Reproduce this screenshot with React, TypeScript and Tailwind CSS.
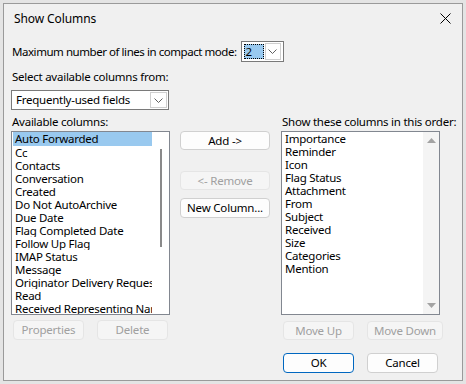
import React from "react";

const FONT = { fontFamily: '"Noto Sans", "Segoe UI", sans-serif' };

function Chevron() {
  return (
    <svg width="9" height="5" viewBox="0 0 9 5" fill="none">
      <path d="M0.5 0.5 L4.5 4.5 L8.5 0.5" stroke="#606060" strokeWidth="1" />
    </svg>
  );
}

function Btn({
  children,
  disabled,
  primary,
  className = "",
}: {
  children: React.ReactNode;
  disabled?: boolean;
  primary?: boolean;
  className?: string;
}) {
  const base =
    "flex items-center justify-center rounded-[4px] text-[11.5px] tracking-[-0.2px] leading-none border ";
  const style = disabled
    ? "bg-[#f5f5f5] border-[#e5e5e5] text-[#a0a0a0]"
    : primary
    ? "bg-[#fdfdfd] border-[#0067c0] text-black"
    : "bg-[#fdfdfd] border-[#d0d0d0] text-black";
  return <div className={base + style + " " + className}>{children}</div>;
}

const available = [
  "Auto Forwarded",
  "Cc",
  "Contacts",
  "Conversation",
  "Created",
  "Do Not AutoArchive",
  "Due Date",
  "Flag Completed Date",
  "Follow Up Flag",
  "IMAP Status",
  "Message",
  "Originator Delivery Request",
  "Read",
  "Received Representing Name",
];

const shown = [
  "Importance",
  "Reminder",
  "Icon",
  "Flag Status",
  "Attachment",
  "From",
  "Subject",
  "Received",
  "Size",
  "Categories",
  "Mention",
];

export default function App() {
  return (
    <div
      className="w-[466px] h-[384px] bg-[#e4e4e4] pt-[3px] pl-[3px] overflow-hidden text-black text-[11.5px] tracking-[-0.25px]"
      style={FONT}
    >
      <div className="w-[460px] h-[378px] bg-[#f0f0f0] border border-[#9a9a9a] flex flex-col">
        {/* title bar */}
        <div className="h-[29px] flex items-center justify-between pl-[10px] pr-[10px]">
          <span className="text-[12px] tracking-[-0.1px]">Show Columns</span>
          <svg width="11" height="11" viewBox="0 0 11 11" className="mr-[1px]">
            <path d="M0.5 0.5 L10.5 10.5 M10.5 0.5 L0.5 10.5" stroke="#000" strokeWidth="1" />
          </svg>
        </div>

        {/* compact mode row */}
        <div className="mt-[8px] pl-[8px] flex items-center h-[21px]">
          <span className="tracking-[-0.45px]">Maximum number of lines in compact mode:</span>
          <div className="ml-[4px] w-[43px] h-[21px] border border-[#7a7a7a] bg-white flex items-center px-[2px]">
            <div className="w-[22px] h-[15px] bg-[#99c9ef] border border-dotted border-black flex items-center leading-none pl-[1px]">
              2
            </div>
            <div className="ml-[1px] w-[17px] h-[17px] border border-[#cfcfcf] bg-white flex items-center justify-center">
              <Chevron />
            </div>
          </div>
        </div>

        <div className="mt-[7px] pl-[8px] leading-[15px]">Select available columns from:</div>

        <div className="mt-[6px] ml-[7px] w-[158px] h-[20px] border border-[#7a7a7a] bg-white flex items-center justify-between pl-[4px] pr-[1px]">
          <span className="leading-none">Frequently-used fields</span>
          <div className="w-[17px] h-[16px] border border-[#cfcfcf] bg-white flex items-center justify-center">
            <Chevron />
          </div>
        </div>

        {/* main area */}
        <div className="mt-[4px] ml-[7px] flex">
          {/* left column */}
          <div className="w-[159px] flex flex-col">
            <div className="pl-[1px] leading-[15px] mb-[2px]">Available columns:</div>
            <div className="h-[184px] border border-[#828790] bg-white flex">
              <div className="flex-1 pl-[1px] overflow-hidden">
                {available.map((item, i) => (
                  <div
                    key={item}
                    className={
                      "pl-[2px] whitespace-nowrap overflow-hidden " +
                      (i === 0 ? "bg-[#99c9ef] h-[14px] leading-[13px]" : "h-[13px] leading-[13px]")
                    }
                  >
                    {item}
                  </div>
                ))}
              </div>
              <div className="w-[17px] flex justify-center pt-[17px]">
                <div className="w-[2px] h-[98px] bg-[#8a8a8a]" />
              </div>
            </div>
            <div className="mt-[5px] ml-[2px] flex gap-[13px]">
              <Btn disabled className="w-[71px] h-[20px]">Properties</Btn>
              <Btn disabled className="w-[71px] h-[20px]">Delete</Btn>
            </div>
          </div>

          {/* middle column */}
          <div className="ml-[10px] w-[90px] flex flex-col pt-[17px]">
            <Btn className="h-[19px]">Add -&gt;</Btn>
            <Btn disabled className="h-[19px] mt-[21px]">&lt;- Remove</Btn>
            <Btn className="h-[20px] mt-[8px]">New Column...</Btn>
          </div>

          {/* right column */}
          <div className="ml-[11px] w-[165px] flex flex-col">
            <div className="pl-[1px] leading-[15px] mb-[2px] whitespace-nowrap">
              Show these columns in this order:
            </div>
            <div className="w-[159px] h-[184px] border border-[#828790] bg-white flex">
              <div className="flex-1 pl-[3px]">
                {shown.map((item) => (
                  <div key={item} className="h-[13px] leading-[13px] whitespace-nowrap">
                    {item}
                  </div>
                ))}
              </div>
              <div className="w-[16px] bg-[#f4f4f4] flex flex-col items-center justify-between py-[6px]">
                <svg width="9" height="5" viewBox="0 0 9 5">
                  <path d="M0 5 L4.5 0 L9 5 Z" fill="#a3a3a3" />
                </svg>
                <svg width="9" height="5" viewBox="0 0 9 5">
                  <path d="M0 0 L4.5 5 L9 0 Z" fill="#a3a3a3" />
                </svg>
              </div>
            </div>
            <div className="mt-[6px] ml-[2px] flex gap-[13px]">
              <Btn disabled className="w-[71px] h-[19px]">Move Up</Btn>
              <Btn disabled className="w-[76px] h-[19px]">Move Down</Btn>
            </div>
            <div className="mt-[13px] ml-[2px] flex gap-[13px]">
              <Btn primary className="w-[71px] h-[20px]">OK</Btn>
              <Btn className="w-[71px] h-[20px]">Cancel</Btn>
            </div>
          </div>
        </div>
      </div>
    </div>
  );
}
